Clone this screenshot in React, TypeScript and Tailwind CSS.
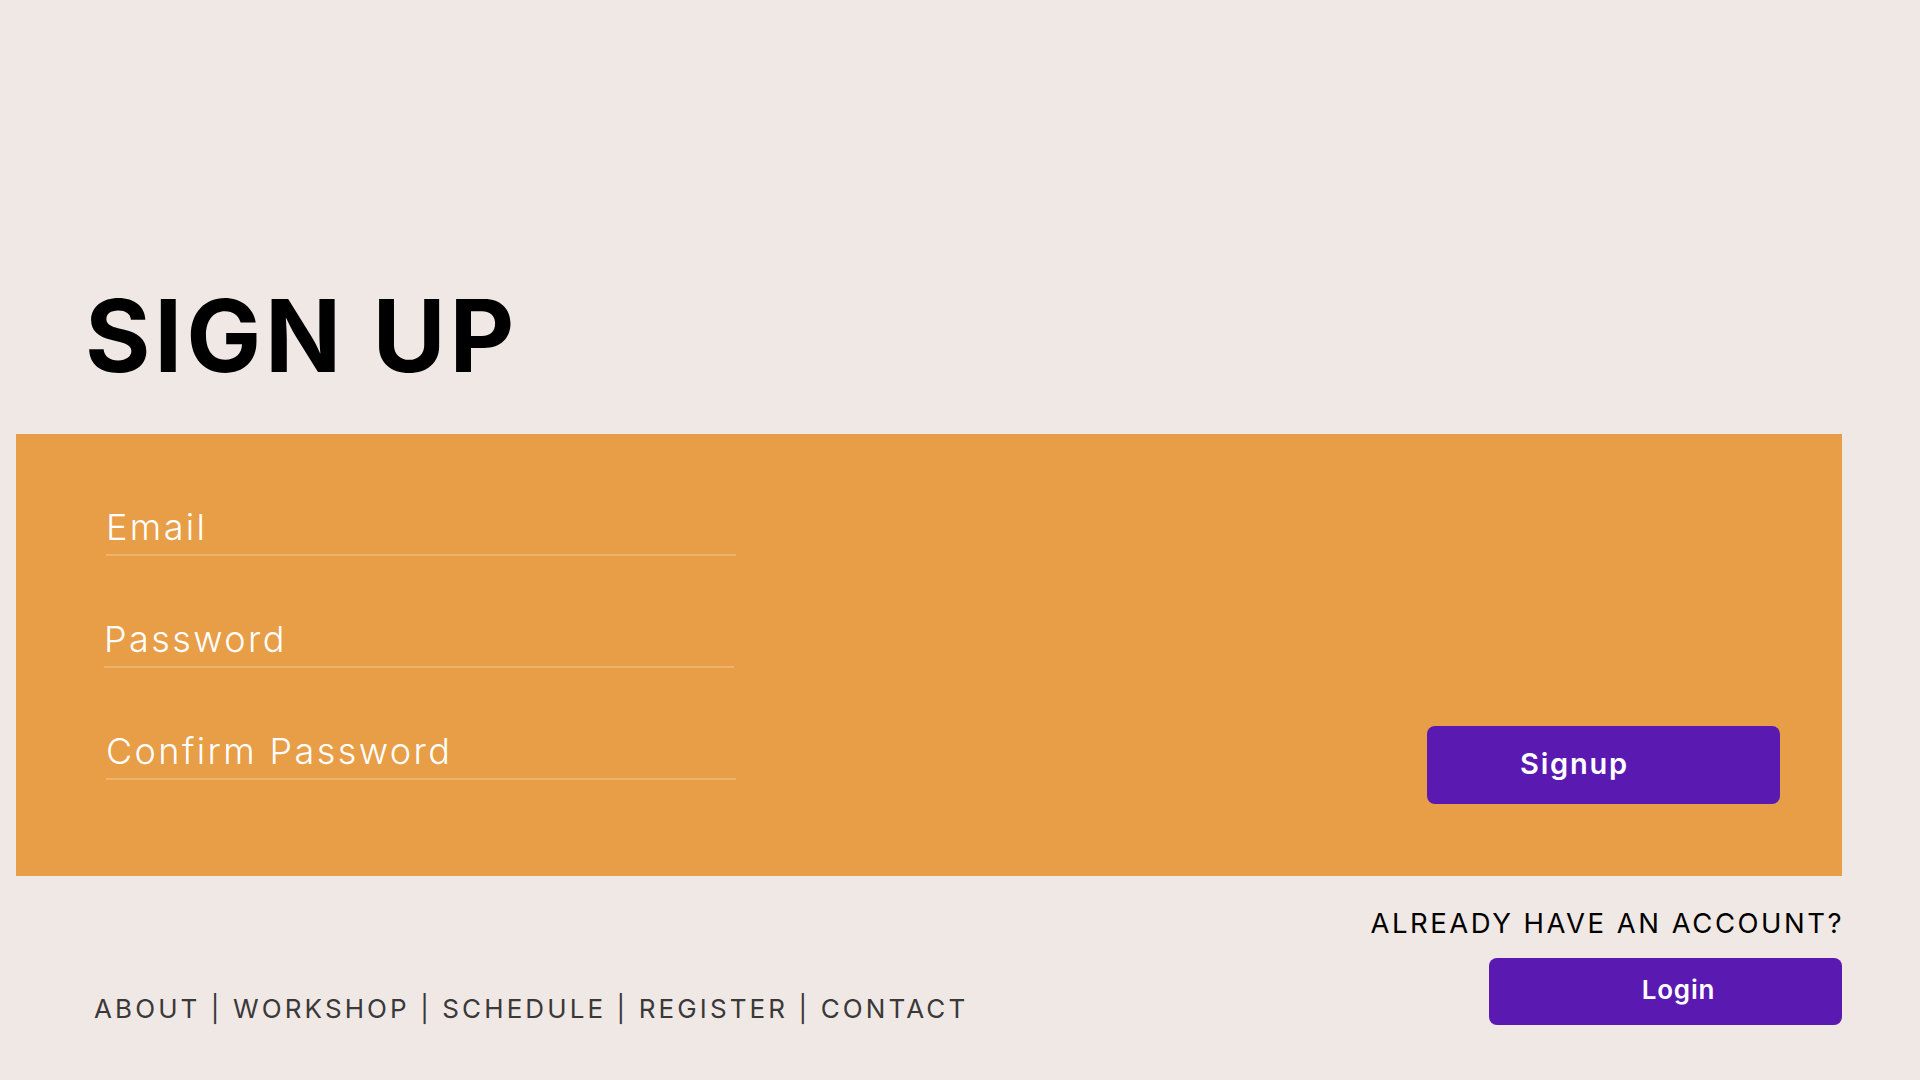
import React from 'react'

const font = { fontFamily: 'Inter, "Noto Sans", sans-serif' }

function Field({ placeholder, type = 'text', shift = '' }: { placeholder: string; type?: string; shift?: string }) {
  return (
    <input
      type={type}
      placeholder={placeholder}
      className={`block w-[630px] h-[53px] pb-[3px] bg-transparent border-b-2 border-[#efb26d] text-[36px] leading-[48px] font-light tracking-[2.4px] text-white placeholder:text-white outline-none ${shift}`}
    />
  )
}

export default function App() {
  return (
    <div className="w-[1920px] h-[1080px] overflow-hidden bg-[#f0e8e5]" style={font}>
      <h1 className="pt-[286px] pl-[85px] mb-[48px] text-[100px] leading-[100px] font-bold text-black tracking-[3.8px]">
        SIGN UP
      </h1>

      <div className="ml-[16px] w-[1826px] h-[442px] bg-[#e89d47] flex justify-between">
        <div className="pl-[88px] pt-[69px] flex flex-col gap-[59px]">
          <Field placeholder="Email" shift="ml-[2px]" />
          <Field placeholder="Password" type="password" />
          <Field placeholder="Confirm Password" type="password" shift="ml-[2px]" />
        </div>
        <button className="self-end mb-[72px] mr-[62px] w-[353px] h-[78px] rounded-[8px] bg-[#5a19b1] text-white text-[29px] font-semibold tracking-[1.8px] flex items-center pl-[93px] pb-[2px]">
          Signup
        </button>
      </div>

      <div className="flex justify-between pr-[78px]">
        <nav className="mt-[117px] pl-[94px] text-[26px] leading-[32px] tracking-[3.1px] text-[#3a3838]">
          ABOUT | WORKSHOP | SCHEDULE | REGISTER | CONTACT
        </nav>
        <div className="pt-[29px] flex flex-col items-end gap-[17px]">
          <div className="mr-[-2px] text-[27.5px] leading-[36px] tracking-[2.5px] text-black">ALREADY HAVE AN ACCOUNT?</div>
          <button className="w-[353px] h-[67px] rounded-[8px] bg-[#5a19b1] text-white text-[26px] font-semibold tracking-[0.8px] flex items-center justify-center pl-[26px] pb-[4px]">
            Login
          </button>
        </div>
      </div>
    </div>
  )
}
